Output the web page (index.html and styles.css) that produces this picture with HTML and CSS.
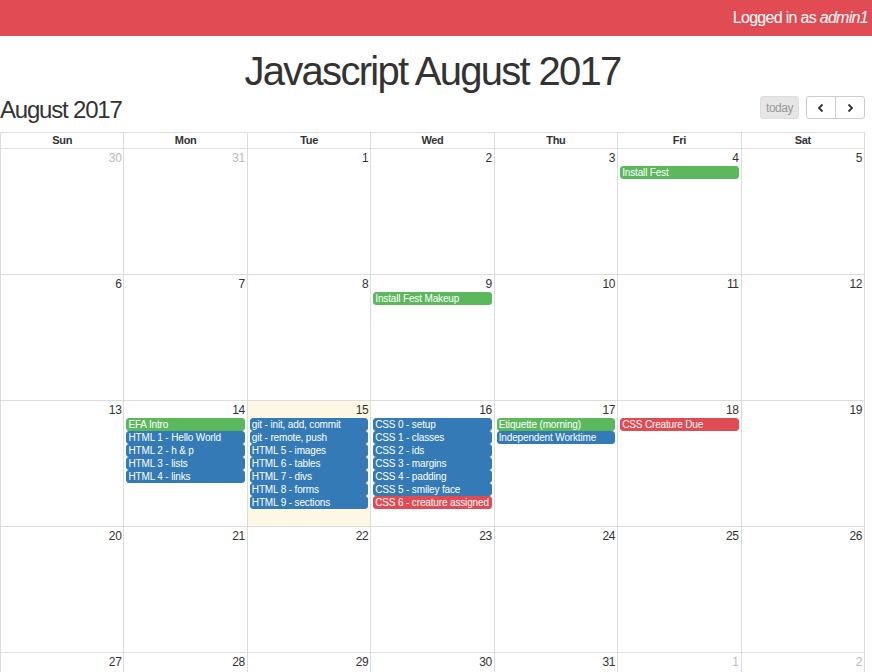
FILE: index.html
```html
<!DOCTYPE html>
<html>
<head>
<meta charset="utf-8">
<link rel="stylesheet" href="styles.css">
</head>
<body>
<div class="navbar"><span>Logged in as <em>admin1</em></span></div>
<h1 class="title">Javascript August 2017</h1>
<div class="cal">
  <div class="toolbar">
    <h2 class="month">August 2017</h2>
    <div class="btns">
      <button class="btn today">today</button>
      <div class="group">
        <button class="btn arrow"><svg width="10" height="10" viewBox="0 0 10 10"><path d="M6.5 1.5 L3 5 L6.5 8.5" fill="none" stroke="#333" stroke-width="1.8"/></svg></button>
        <button class="btn arrow"><svg width="10" height="10" viewBox="0 0 10 10"><path d="M3.5 1.5 L7 5 L3.5 8.5" fill="none" stroke="#333" stroke-width="1.8"/></svg></button>
      </div>
    </div>
  </div>
  <div class="grid">
    <div class="head">
      <div>Sun</div><div>Mon</div><div>Tue</div><div>Wed</div><div>Thu</div><div>Fri</div><div>Sat</div>
    </div>
    <div class="week">
      <div class="day other"><span class="num">30</span></div>
      <div class="day other"><span class="num">31</span></div>
      <div class="day"><span class="num">1</span></div>
      <div class="day"><span class="num">2</span></div>
      <div class="day"><span class="num">3</span></div>
      <div class="day"><span class="num">4</span><div class="ev green">Install Fest</div></div>
      <div class="day"><span class="num">5</span></div>
    </div>
    <div class="week">
      <div class="day"><span class="num">6</span></div>
      <div class="day"><span class="num">7</span></div>
      <div class="day"><span class="num">8</span></div>
      <div class="day"><span class="num">9</span><div class="ev green">Install Fest Makeup</div></div>
      <div class="day"><span class="num">10</span></div>
      <div class="day"><span class="num">11</span></div>
      <div class="day"><span class="num">12</span></div>
    </div>
    <div class="week">
      <div class="day"><span class="num">13</span></div>
      <div class="day"><span class="num">14</span>
        <div class="ev green">EFA Intro</div>
        <div class="ev blue">HTML 1 - Hello World</div>
        <div class="ev blue">HTML 2 - h &amp; p</div>
        <div class="ev blue">HTML 3 - lists</div>
        <div class="ev blue">HTML 4 - links</div>
      </div>
      <div class="day todaycell"><span class="num">15</span>
        <div class="ev blue">git - init, add, commit</div>
        <div class="ev blue">git - remote, push</div>
        <div class="ev blue">HTML 5 - images</div>
        <div class="ev blue">HTML 6 - tables</div>
        <div class="ev blue">HTML 7 - divs</div>
        <div class="ev blue">HTML 8 - forms</div>
        <div class="ev blue">HTML 9 - sections</div>
      </div>
      <div class="day"><span class="num">16</span>
        <div class="ev blue">CSS 0 - setup</div>
        <div class="ev blue">CSS 1 - classes</div>
        <div class="ev blue">CSS 2 - ids</div>
        <div class="ev blue">CSS 3 - margins</div>
        <div class="ev blue">CSS 4 - padding</div>
        <div class="ev blue">CSS 5 - smiley face</div>
        <div class="ev red">CSS 6 - creature assigned</div>
      </div>
      <div class="day"><span class="num">17</span>
        <div class="ev green">Etiquette (morning)</div>
        <div class="ev blue">Independent Worktime</div>
      </div>
      <div class="day"><span class="num">18</span>
        <div class="ev red">CSS Creature Due</div>
      </div>
      <div class="day"><span class="num">19</span></div>
    </div>
    <div class="week">
      <div class="day"><span class="num">20</span></div>
      <div class="day"><span class="num">21</span></div>
      <div class="day"><span class="num">22</span></div>
      <div class="day"><span class="num">23</span></div>
      <div class="day"><span class="num">24</span></div>
      <div class="day"><span class="num">25</span></div>
      <div class="day"><span class="num">26</span></div>
    </div>
    <div class="week">
      <div class="day"><span class="num">27</span></div>
      <div class="day"><span class="num">28</span></div>
      <div class="day"><span class="num">29</span></div>
      <div class="day"><span class="num">30</span></div>
      <div class="day"><span class="num">31</span></div>
      <div class="day other"><span class="num">1</span></div>
      <div class="day other"><span class="num">2</span></div>
    </div>
  </div>
</div>
</body>
</html>
```
FILE: styles.css
```css
html, body {
  margin: 0;
  padding: 0;
  background: #fff;
  font-family: "Liberation Sans", Arial, sans-serif;
  color: #333;
  overflow: hidden;
}
.navbar {
  height: 36px;
  background: #e14b53;
  color: #fff;
  display: flex;
  justify-content: flex-end;
  align-items: center;
  padding-right: 4px;
  font-size: 16px;
  letter-spacing: -0.7px;
}
.navbar em { font-style: italic; }
.title {
  width: 865px;
  margin: 14px 0 0;
  text-align: center;
  font-size: 40px;
  font-weight: normal;
  line-height: 42px;
  letter-spacing: -1.7px;
  color: #333;
}
.cal { width: 865px; }
.toolbar {
  display: flex;
  justify-content: space-between;
  align-items: flex-end;
  margin-top: 0;
  height: 32px;
}
.month {
  margin: 0;
  font-size: 24px;
  font-weight: normal;
  line-height: 28px;
  letter-spacing: -1.2px;
}
.btns { display: flex; gap: 7px; align-items: center; padding-bottom: 5px; }
.btn {
  height: 23px;
  border: 1px solid #ccc;
  background: #fff;
  font-family: "Liberation Sans", Arial, sans-serif;
  font-size: 12px;
  letter-spacing: -0.5px;
  padding: 0 6px;
  margin: 0;
  border-radius: 3px;
  display: flex;
  align-items: center;
  justify-content: center;
}
.today { color: #999; background: #e6e6e6; border-color: #ddd; width: 39px; }
.group { display: flex; }
.arrow { width: 30px; }
.group .arrow:first-child { border-radius: 3px 0 0 3px; }
.group .arrow:last-child { border-radius: 0 3px 3px 0; margin-left: -1px; }
.grid {
  margin-top: 8px;
  border-top: 1px solid #ddd;
  border-left: 1px solid #ddd;
}
.head, .week {
  display: grid;
  grid-template-columns: repeat(7, minmax(0, 1fr));
}
.head div {
  border-right: 1px solid #ddd;
  border-bottom: 1px solid #ddd;
  text-align: center;
  font-weight: bold;
  font-size: 11px;
  letter-spacing: -0.3px;
  height: 15px;
  line-height: 15px;
}
.week { height: 126px; }
.day {
  border-right: 1px solid #ddd;
  border-bottom: 1px solid #ddd;
  display: flex;
  flex-direction: column;
  padding-top: 2px;
  min-width: 0;
}
.num {
  align-self: flex-end;
  font-size: 12px;
  line-height: 14px;
  letter-spacing: -0.4px;
  padding-right: 2px;
  height: 14px;
  margin-bottom: 1px;
}
.other .num { color: #bbb; }
.todaycell { background: #fcf8e3; }
.ev {
  margin: 0 2px;
  border-radius: 3px;
  color: #fff;
  font-size: 10px;
  letter-spacing: -0.15px;
  height: 11px;
  line-height: 11px;
  padding: 0 1px;
  border: 1px solid;
  white-space: nowrap;
  overflow: hidden;
}
.blue { background: #337ab7; border-color: #337ab7; }
.green { background: #5cb85c; border-color: #5cb85c; }
.red { background: #e14b53; border-color: #e14b53; }
```
